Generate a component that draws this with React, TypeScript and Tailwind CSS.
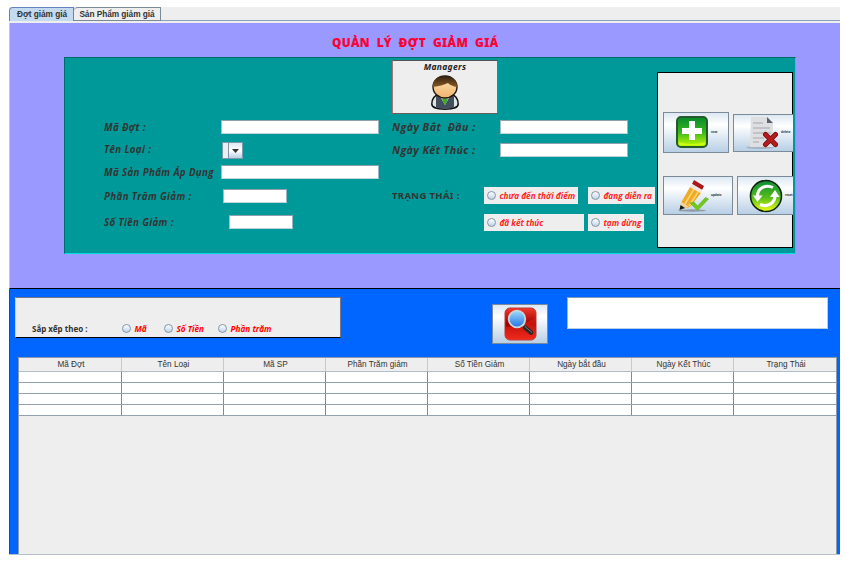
import React from "react";

const openSans = "font-['Open_Sans','Noto_Sans',sans-serif]";
const notoSans = "font-['Noto_Sans','Open_Sans',sans-serif]";
const arial = "font-['Liberation_Sans',Arial,sans-serif]";
const steel =
  "bg-linear-to-b from-[#dde8f3] via-white via-30% to-[#b8cfe5] border border-[#7a8a99]";

function Field({ className }: { className: string }) {
  return (
    <div
      className={`shrink-0 bg-white border border-t-[#8f9fae] border-l-[#a5bcc8] border-r-[#9cb5c2] border-b-[#c3d5dc] ${className}`}
    />
  );
}

function Label({ children, className }: { children: React.ReactNode; className: string }) {
  return (
    <span
      className={`block shrink-0 whitespace-pre font-bold italic text-[#333333] leading-[14px] ${openSans} ${className}`}
    >
      {children}
    </span>
  );
}

function Dot() {
  return (
    <span className="block size-[9px] shrink-0 rounded-full border border-[#8296aa] bg-linear-to-b from-white to-[#bfd3e7]" />
  );
}

function Radio({ children, className }: { children: string; className: string }) {
  return (
    <div
      className={`flex h-[17px] shrink-0 items-center bg-[#eeeeee] pl-[2.5px] gap-[4px] whitespace-nowrap font-bold italic leading-none ${openSans} ${className}`}
    >
      <Dot />
      <span className="pt-[2px]">{children}</span>
    </div>
  );
}

function ManagerIcon() {
  return (
    <svg width="28" height="35" viewBox="0 0 28 35" className="block">
      <defs>
        <linearGradient id="skin" x1="0" y1="0" x2="0" y2="1">
          <stop offset="0" stopColor="#ffe2b8" />
          <stop offset="1" stopColor="#efb56c" />
        </linearGradient>
        <linearGradient id="hair" x1="0" y1="0" x2="0" y2="1">
          <stop offset="0" stopColor="#302010" />
          <stop offset="1" stopColor="#8a5a26" />
        </linearGradient>
      </defs>
      <path d="M.8 29c0-5 3-9 7-9.500h12.400c4 .5 7 4.500 7 9.500 0 3-5 5.200-13.200 5.200S.8 32 .8 29z" fill="#dfe4e8" stroke="#111" strokeWidth="1.500" />
      <path d="M5 21h18v11.500q-9 2.500-18 0z" fill="#434f5c" />
      <path d="M9 21l5 9 5-9z" fill="#fff" />
      <path d="M11 23.500h6l-1 3.500-2 3-2-3z" fill="#3fa932" />
      <ellipse cx="14" cy="12" rx="12" ry="11" fill="url(#skin)" stroke="#20150c" strokeWidth="1.400" />
      <path d="M2 12C1.500 4 7 1 14 1s12.500 4 12 11c-4-.5-7-2-9-4C13 10 8 11 2 12z" fill="url(#hair)" />
    </svg>
  );
}

function AddIcon() {
  return (
    <svg width="32" height="32" viewBox="0 0 32 32" className="block shrink-0">
      <defs>
        <linearGradient id="add" x1="0" y1="0" x2="0" y2="1">
          <stop offset="0" stopColor="#078a2c" />
          <stop offset=".5" stopColor="#38b51e" />
          <stop offset="1" stopColor="#c8ff00" />
        </linearGradient>
      </defs>
      <rect x="1" y="1" width="30" height="30" rx="4" fill="url(#add)" stroke="#245a2c" strokeWidth="2" />
      <path d="M3 26q13 4 26 0v3H3z" fill="#e0ff20" opacity=".6" />
      <path d="M13 5h6v7h7v6h-7v6h-6v-6H6v-6h7z" fill="#fff" />
    </svg>
  );
}

function DeleteIcon() {
  return (
    <svg width="32" height="34" viewBox="0 0 32 34" className="block shrink-0">
      <ellipse cx="14" cy="31.500" rx="14" ry="1.500" fill="#98a4ae" opacity=".7" />
      <path d="M5 1h16l6 6v24H4z" fill="#dedfe0" />
      <path d="M21 1l6 6h-6z" fill="#59616a" />
      <path d="M7 7h10M7 12h17M7 17h18M7 22h11M7 26h6" stroke="#b8bbbd" strokeWidth="1.500" />
      <path d="M19.500 18.500l10 10m0-10l-10 10" stroke="#730d10" strokeWidth="5" strokeLinecap="round" />
      <path d="M19.500 18.500l10 10m0-10l-10 10" stroke="#b51c1d" strokeWidth="3.400" strokeLinecap="round" />
    </svg>
  );
}

function EditIcon() {
  return (
    <svg width="32" height="34" viewBox="0 0 32 34" className="block shrink-0">
      <ellipse cx="15" cy="31.500" rx="14" ry="1.200" fill="#77818a" opacity=".7" />
      <path d="M4.500 23L13 8l11 6-11 14-8 2z" fill="#eeaa2b" />
      <path d="M8 25L17 10M12 27l9-14" stroke="#ffd56a" strokeWidth="1.500" />
      <path d="M15 5l2-4 10 6-2 4z" fill="#a8171b" />
      <path d="M13 8l2-3 10.500 6-2 3z" fill="#f0e4dc" />
      <path d="M4 23l4 2 4 3-9 2z" fill="#f3d29c" />
      <path d="M3.500 26l4.500 3-5.500 2z" fill="#181818" />
      <path d="M13 24l4-1 3.500 4 8-8.500 3 1.500-11 11.500z" fill="#72c820" stroke="#5fae18" strokeWidth=".6" />
    </svg>
  );
}

function ResetIcon() {
  return (
    <svg width="34" height="34" viewBox="0 0 34 34" className="block shrink-0">
      <defs>
        <linearGradient id="reset" x1="0" y1="0" x2="0" y2="1">
          <stop offset="0" stopColor="#088c37" />
          <stop offset=".55" stopColor="#55bd1b" />
          <stop offset="1" stopColor="#f0ff10" />
        </linearGradient>
      </defs>
      <circle cx="17" cy="17" r="15.500" fill="url(#reset)" stroke="#10240f" strokeWidth="1.600" />
      <path d="M24 8.500C17 5 8.500 9 8.500 17" fill="none" stroke="#fff" strokeWidth="3" />
      <path d="M4 16.500h9.500L8.500 23z" fill="#fff" />
      <path d="M11 25.500c7 3 15-1 15-9" fill="none" stroke="#fff" strokeWidth="3.200" />
      <path d="M21 18h9.500L26 11z" fill="#fff" />
    </svg>
  );
}

function SearchIcon() {
  return (
    <svg width="33" height="34" viewBox="0 0 33 34" className="block">
      <defs>
        <linearGradient id="red" x1="0" y1="0" x2="0" y2="1">
          <stop offset="0" stopColor="#f53a2e" />
          <stop offset=".5" stopColor="#970000" />
          <stop offset="1" stopColor="#ff3525" />
        </linearGradient>
        <linearGradient id="lens" x1="0" y1="0" x2="0" y2="1">
          <stop offset="0" stopColor="#9bdcf7" />
          <stop offset="1" stopColor="#2571e8" />
        </linearGradient>
      </defs>
      <rect x="1" y="1" width="31" height="32" rx="5" fill="url(#red)" stroke="#b83a34" />
      <path d="M2 20Q17 20 31 11v16q0 5-5 5H7q-5 0-5-5z" fill="#e82015" opacity=".55" />
      <path d="M19 18l3 3" stroke="#ddd" strokeWidth="2.500" />
      <path d="M21 20.500l6 5" stroke="#292929" strokeWidth="4.500" strokeLinecap="round" />
      <path d="M21 19.500l7 6" stroke="#888" strokeWidth=".8" />
      <circle cx="13" cy="12" r="8.300" fill="url(#lens)" stroke="#c7d5dc" strokeWidth="1.800" />
    </svg>
  );
}

function Tiny({ children }: { children: string }) {
  return <span className={`text-[3px] font-bold leading-none text-[#333] ${notoSans}`}>{children}</span>;
}

const columns = ["Mã Đợt", "Tên Loại", "Mã SP", "Phần Trăm giảm", "Số Tiền Giảm", "Ngày bắt đầu", "Ngày Kết Thúc", "Trạng Thái"];

export default function App() {
  return (
    <div className="h-[561px] w-[857px] overflow-hidden bg-white pl-[9px] pt-[7px]">
      <div className="flex h-[548px] w-[831px] flex-col border-b border-[#b8bfcc]">
        <div className={`flex h-[16px] shrink-0 items-start bg-[#eeeeee] text-[8.3px] font-bold tracking-[-0.05px] text-[#333] ${arial}`}>
          <div className="flex h-[14px] w-[65px] items-center justify-center whitespace-nowrap rounded-tl-[4px] border border-b-0 border-[#6382bf] bg-[#c4daee] pl-px">
            Đợt giảm giá
          </div>
          <div className="flex h-[14px] w-[87px] items-center justify-center whitespace-nowrap rounded-tl-[4px] border border-l-0 border-[#7a8a99] bg-[#eeeeee]">
            Sản Phẩm giảm giá
          </div>
          <div className="h-[14px] flex-1 border-b border-[#8ca0c0]" />
        </div>

        <div className="flex h-[266px] shrink-0 flex-col border-b border-l border-b-black border-l-[#b8c6e8] bg-[#9999ff]">
          <h1 className={`h-[34px] shrink-0 whitespace-pre pl-[322px] pt-[11px] text-[11.8px] font-black leading-[16px] tracking-[0.35px] text-[#ff0033] ${notoSans}`}>
            QUẢN  LÝ  ĐỢT  GIẢM  GIÁ
          </h1>
          <div className="ml-[54px] flex h-[197px] w-[732px] border border-b-[#00dede] border-l-[#006b6b] border-r-[#00dede] border-t-[#006b6b] bg-[#009999]">
            <div className="flex w-[327px] shrink-0 flex-col pl-[39px] pt-[62px] text-[9.7px] tracking-[0.38px]">
              <div className="flex h-[22px] items-start">
                <Label className="w-[117px] pt-px">Mã Đợt :</Label>
                <Field className="h-[14px] w-[158px]" />
              </div>
              <div className="flex h-[23px] items-start">
                <Label className="w-[118px] pt-px">Tên Loại :</Label>
                <div className="flex h-[17px] w-[21px] border border-[#7a9aae]">
                  <div className="w-[6px] border-r border-[#8193a8] bg-[#eee]" />
                  <div className="flex flex-1 items-center justify-center bg-linear-to-b from-[#dde8f3] via-white to-[#b8cfe5]">
                    <svg width="7" height="4" viewBox="0 0 7 4"><path d="M0 0h7L3.500 4z" fill="#333" /></svg>
                  </div>
                </div>
              </div>
              <div className="flex h-[24px] items-start">
                <Label className="w-[117px] pt-px">Mã Sản Phẩm Áp Dụng</Label>
                <Field className="h-[14px] w-[158px]" />
              </div>
              <div className="flex h-[26px] items-start">
                <Label className="w-[119px] pt-px">Phần Trăm Giảm :</Label>
                <Field className="h-[14px] w-[64px]" />
              </div>
              <div className="flex items-start">
                <Label className="w-[125px] pt-px">Số Tiền Giảm :</Label>
                <Field className="h-[14px] w-[64px]" />
              </div>
            </div>

            <div className="flex w-[265px] shrink-0 flex-col pt-[2px]">
              <div className="flex h-[54px] w-[106px] flex-col items-center border border-b-[#665c5c] border-l-[#a77] border-r-[#776b6b] border-t-[#555] bg-[#eeeeee]">
                <span className={`h-[14px] text-[8.5px] font-bold italic leading-[12px] tracking-[0.3px] text-[#222] ${notoSans}`}>Managers</span>
                <ManagerIcon />
              </div>
              <div className="mt-[6px] flex h-[23px] items-start text-[10.7px] tracking-[0.42px]">
                <Label className="w-[108px]">Ngày Bắt  Đầu :</Label>
                <Field className="h-[14px] w-[128px]" />
              </div>
              <div className="flex h-[44px] items-start text-[10.7px] tracking-[0.38px]">
                <Label className="w-[108px]">Ngày Kết Thúc :</Label>
                <Field className="h-[14px] w-[128px]" />
              </div>
              <div className="flex h-[27px] items-start text-[8.2px] text-[#ff2525]">
                <span className={`w-[92px] shrink-0 pt-[2px] text-[9.5px] font-bold leading-[14px] tracking-[0.35px] text-[#333] ${notoSans}`}>TRẠNG THÁI :</span>
                <Radio className="w-[94px]">chưa đến thời điểm</Radio>
                <Radio className="ml-[10px] w-[67px]">đang diễn ra</Radio>
              </div>
              <div className="flex pl-[92px] text-[8.2px] text-[#ff2525]">
                <Radio className="w-[100px]">đã kết thúc</Radio>
                <Radio className="ml-[4px] w-[56px]">tạm dừng</Radio>
              </div>
            </div>

            <div className="mt-[14px] flex h-[176px] w-[136px] shrink-0 flex-col gap-[23px] border border-black bg-[#eeeeee] pl-[5px] pt-[39px]">
              <div className="-mr-px flex items-center gap-[4px]">
                <div className={`flex h-[41px] w-[66px] shrink-0 items-center gap-[3px] pb-px pl-[12px] ${steel}`}>
                  <AddIcon /><Tiny>new</Tiny>
                </div>
                <div className={`flex h-[38px] flex-1 items-center gap-[3px] border-r-0 pl-[12px] ${steel}`}>
                  <DeleteIcon /><Tiny>delete</Tiny>
                </div>
              </div>
              <div className="-mr-px flex gap-[4px]">
                <div className={`flex h-[39px] w-[70px] shrink-0 items-center gap-[2px] pl-[13px] ${steel}`}>
                  <EditIcon /><Tiny>update</Tiny>
                </div>
                <div className={`flex h-[39px] flex-1 items-center gap-[2px] border-r-0 pl-[11px] ${steel}`}>
                  <ResetIcon /><Tiny>reset</Tiny>
                </div>
              </div>
            </div>
          </div>
        </div>

        <div className="flex min-h-0 flex-1 flex-col border-l border-[#004fc4] bg-[#0066ff]">
          <div className="flex h-[68px] shrink-0 items-start pl-[5px] pt-[8px]">
            <div className="flex h-[41px] w-[326px] items-end border border-b-black border-l-[#ccd] border-r-[#778] border-t-[#778] bg-[#eeeeee] text-[8.2px] text-[#ff0000]">
              <span className={`w-[86px] pl-[16px] pb-[3px] whitespace-nowrap text-[8px] font-bold leading-[10px] text-[#333] ${notoSans}`}>Sắp xếp theo :</span>
              <Radio className="ml-[17px] w-[42px]">Mã</Radio>
              <Radio className="w-[54px]">Số Tiền</Radio>
              <Radio className="w-[70px]">Phần trăm</Radio>
            </div>
            <div className={`ml-[151px] mt-[7px] flex h-[40px] w-[56px] items-center justify-center ${steel}`}>
              <SearchIcon />
            </div>
            <div className="ml-[19px] h-[32px] w-[261px] border border-b-[#b8cfe5] border-l-[#a5b8cc] border-r-[#b8cfe5] border-t-[#8199b0] bg-white" />
          </div>
          <div className={`ml-[8px] flex min-h-0 w-[819px] flex-1 flex-col border border-b-0 border-[#8999a8] bg-[#eeeeee] text-[8.2px] text-[#333] ${arial}`}>
            <div className="grid h-[14px] shrink-0 grid-cols-[103px_repeat(6,102px)_1fr] border-b border-[#b0bdca]">
              {columns.map((name) => (
                <div key={name} className="flex items-center justify-center whitespace-nowrap border-r border-[#c3cad5] pl-[2px] pt-[2px] leading-none last:border-r-0">{name}</div>
              ))}
            </div>
            {[0, 1, 2, 3].map((row) => (
              <div key={row} className="grid h-[11px] shrink-0 grid-cols-[103px_repeat(6,102px)_1fr] border-b border-[#92a1b0] bg-white">
                {columns.map((name) => (
                  <div key={name} className="border-r border-[#7a8a99] last:border-r-0" />
                ))}
              </div>
            ))}
          </div>
        </div>
      </div>
    </div>
  );
}
